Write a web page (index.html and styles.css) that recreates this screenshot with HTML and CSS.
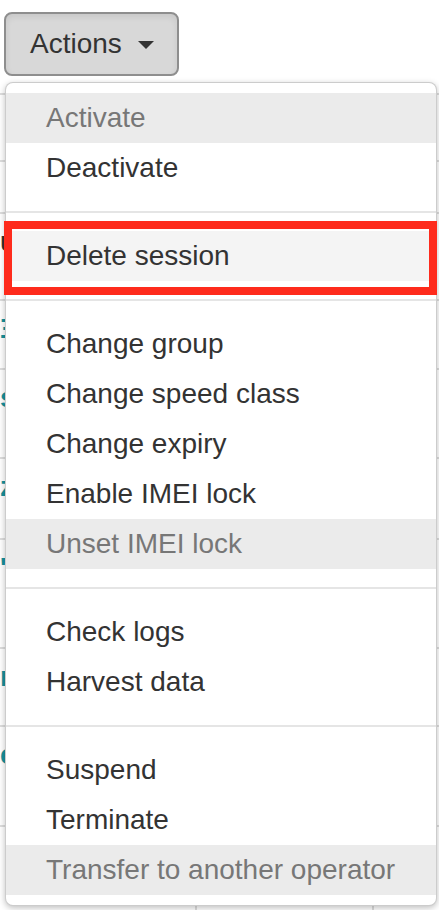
FILE: index.html
```html
<!DOCTYPE html>
<html lang="en">
<head>
<meta charset="utf-8">
<title>Actions dropdown</title>
<link rel="stylesheet" href="styles.css">
</head>
<body>
<div class="page">
  <button class="btn" type="button">Actions <span class="caret"></span></button>

  <div class="table">
    <div class="row r1"><span class="cell c1"></span><span class="cell c2"></span><span class="cell c3"></span></div>
    <div class="row r2"><span class="cell c1"></span><span class="cell c2"></span><span class="cell c3"></span></div>
    <div class="row r3"><span class="cell c1 dark">u</span><span class="cell c2"></span><span class="cell c3 dark">E</span></div>
    <div class="row r4"><span class="cell c1">Ξ</span><span class="cell c2"></span><span class="cell c3"></span></div>
    <div class="row r5"><span class="cell c1">s</span><span class="cell c2"></span><span class="cell c3"></span></div>
    <div class="row r6"><span class="cell c1">z</span><span class="cell c2"></span><span class="cell c3"></span></div>
    <div class="row r7"><span class="cell c1">'r</span><span class="cell c2"></span><span class="cell c3"></span></div>
    <div class="row r8"><span class="cell c1">r</span><span class="cell c2"></span><span class="cell c3"></span></div>
    <div class="row r9"><span class="cell c1">e</span><span class="cell c2"></span><span class="cell c3"></span></div>
    <div class="row r10"><span class="cell c1"></span><span class="cell c2"></span><span class="cell c3"></span></div>
  </div>

  <ul class="menu">
    <li class="item disabled">Activate</li>
    <li class="item">Deactivate</li>
    <li class="divider"></li>
    <li class="item hover">Delete session</li>
    <li class="divider"></li>
    <li class="item">Change group</li>
    <li class="item">Change speed class</li>
    <li class="item">Change expiry</li>
    <li class="item">Enable IMEI lock</li>
    <li class="item disabled">Unset IMEI lock</li>
    <li class="divider"></li>
    <li class="item">Check logs</li>
    <li class="item">Harvest data</li>
    <li class="divider"></li>
    <li class="item">Suspend</li>
    <li class="item">Terminate</li>
    <li class="item disabled">Transfer to another operator</li>
  </ul>

  <div class="highlight-box"></div>
</div>
</body>
</html>
```

FILE: styles.css
```css
* { box-sizing: border-box; }

html, body {
  margin: 0;
  padding: 0;
  background: #ffffff;
}

body {
  font-family: "Liberation Sans", Arial, Helvetica, sans-serif;
  color: #333333;
}

.page {
  position: relative;
  width: 439px;
  height: 910px;
  overflow: hidden;
}

.btn {
  display: flex;
  align-items: center;
  margin: 12px 0 0 4px;
  width: 175px;
  height: 64px;
  padding: 0 0 0 24px;
  border: 2px solid #8e8e8e;
  border-radius: 8px;
  background: #d8d8d8;
  box-shadow: inset 0 3px 6px rgba(0,0,0,0.08);
  font-family: "Liberation Sans", Arial, Helvetica, sans-serif;
  font-size: 28px;
  color: #333333;
  line-height: 1;
}

.caret {
  display: inline-block;
  width: 0;
  height: 0;
  margin-left: 16px;
  margin-top: 2px;
  border-top: 8px solid #333333;
  border-left: 8px solid transparent;
  border-right: 8px solid transparent;
}

.table {
  margin-top: 17px;
  width: 439px;
}

.row {
  display: flex;
  border-top: 2px solid #dddddd;
}

.cell {
  display: block;
  font-size: 28px;
  font-weight: bold;
  color: #17909c;
  line-height: 1;
}

.cell.dark { color: #333333; }

.c1 { width: 195px; padding: 14px 0 0 0; }
.c2 { width: 177px; border-left: 2px solid #dddddd; }
.c3 { width: 67px; border-left: 2px solid #dddddd; padding: 14px 0 0 64px; overflow: hidden; }

.r1 { height: 67px; }
.r2 { height: 52px; }
.r3 { height: 87px; }
.r4 { height: 69px; }
.r5 { height: 89px; }
.r6 { height: 81px; }
.r7 { height: 109px; }
.r8 { height: 78px; }
.r9 { height: 100px; }
.r10 { height: 100px; }

.menu {
  position: absolute;
  top: 82px;
  left: 5px;
  width: 432px;
  margin: 0;
  padding: 10px 0;
  list-style: none;
  background: #ffffff;
  border: 1px solid rgba(0,0,0,0.2);
  border-radius: 8px;
  box-shadow: 0 2px 6px rgba(0,0,0,0.25);
}

.item {
  height: 50px;
  line-height: 50px;
  padding-left: 40px;
  font-size: 28px;
  color: #333333;
  white-space: nowrap;
}

.item.disabled {
  color: #777777;
  background: #ebebeb;
}

.item.hover {
  background: #f4f4f4;
}

.divider {
  height: 2px;
  margin: 18px 0;
  background: #e5e5e5;
}

.highlight-box {
  position: absolute;
  top: 221px;
  left: 4px;
  width: 433px;
  height: 74px;
  border: 8px solid #fe2b1c;
}
```
